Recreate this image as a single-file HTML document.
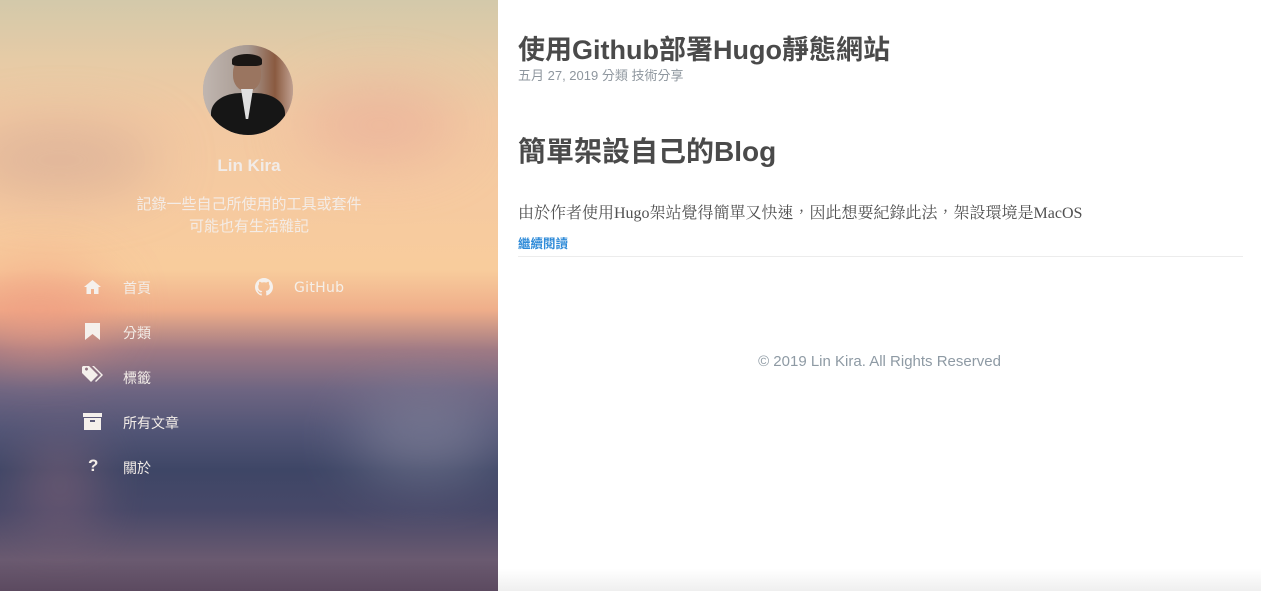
<!DOCTYPE html>
<html><head><meta charset="utf-8"><style>
*{margin:0;padding:0;box-sizing:border-box}
html,body{width:1261px;height:591px;overflow:hidden;background:#fff;font-family:"Liberation Sans","Noto Sans CJK TC",sans-serif}
#side{position:absolute;left:0;top:0;width:498px;height:591px;overflow:hidden;
background:linear-gradient(180deg,#d3c9aa 0px,#e6cba6 60px,#f2c9a2 120px,#f6caa0 200px,#f8cc9c 270px,#efae8a 310px,#a07a84 350px,#6e6582 390px,#525576 430px,#3e4666 470px,#474868 510px,#6a5a70 560px,#5c4a60 591px)}
.blob{position:absolute;border-radius:50%;filter:blur(30px)}
#main{position:absolute;left:498px;top:0;width:763px;height:591px}
.c{position:absolute;color:#f2ece8}
.nav{position:absolute;font-size:14px;color:#f3ede8}
svg{position:absolute;fill:#f5f0ec}
</style></head><body>
<div id="side">
 <div class="blob" style="left:-40px;top:130px;width:200px;height:60px;background:#c29890;opacity:.5"></div>
 <div class="blob" style="left:300px;top:90px;width:160px;height:70px;background:#e8a898;opacity:.6"></div>
 <div class="blob" style="left:-30px;top:270px;width:140px;height:80px;background:#f09a80;opacity:.7"></div>
 <div class="blob" style="left:350px;top:390px;width:150px;height:90px;background:#8a8aa0;opacity:.6"></div>
 <div class="blob" style="left:30px;top:440px;width:60px;height:90px;background:#a07080;opacity:.6"></div>
 <div style="position:absolute;left:203px;top:45px;width:90px;height:90px;border-radius:50%;overflow:hidden;background:#b8a8a0">
  <div style="position:absolute;left:0;top:0;width:90px;height:90px;background:linear-gradient(90deg,#c0b6b0,#a89a92 50%,#8a5a40 80%,#c0a090)"></div>
  <div style="position:absolute;left:30px;top:12px;width:28px;height:34px;border-radius:45%;background:#9a7560"></div>
  <div style="position:absolute;left:29px;top:9px;width:30px;height:12px;border-radius:50% 50% 20% 20%;background:#1a1614"></div>
  <div style="position:absolute;left:8px;top:48px;width:74px;height:50px;border-radius:40% 40% 0 0;background:#161616"></div>
  <div style="position:absolute;left:38px;top:44px;width:12px;height:30px;background:#e0e0e0;clip-path:polygon(0 0,100% 0,60% 100%,40% 100%)"></div>
 </div>
 <div class="c" style="left:0;width:498px;top:155px;text-align:center;font-weight:bold;font-size:17px;line-height:22px">Lin Kira</div>
 <div class="c" style="left:0;width:498px;top:194px;text-align:center;font-size:15px;line-height:22px;color:#f4ece6">記錄一些自己所使用的工具或套件<br>可能也有生活雜記</div>
 <svg style="left:83px;top:279px" width="19" height="16" viewBox="0 0 19 16"><path d="M9.5 1L1 8h2.5v7h4.5v-5h3v5h4.5V8H18z"/></svg>
 <div class="nav" style="left:123px;top:278px">首頁</div>
 <svg style="left:255px;top:278px" width="18" height="18" viewBox="0 0 16 16"><path d="M8 0C3.6 0 0 3.6 0 8c0 3.5 2.3 6.5 5.5 7.6.4.1.5-.2.5-.4v-1.4c-2.2.5-2.7-1-2.7-1-.4-.9-.9-1.2-.9-1.2-.7-.5.1-.5.1-.5.8.1 1.2.8 1.2.8.7 1.2 1.9.9 2.3.7.1-.5.3-.9.5-1.1-1.8-.2-3.6-.9-3.6-4 0-.9.3-1.6.8-2.1-.1-.2-.4-1 .1-2.1 0 0 .7-.2 2.2.8.6-.2 1.3-.3 2-.3s1.4.1 2 .3c1.5-1 2.2-.8 2.2-.8.4 1.1.2 1.9.1 2.1.5.6.8 1.3.8 2.1 0 3.1-1.9 3.7-3.6 3.9.3.3.5.8.5 1.5v2.2c0 .2.1.5.6.4C13.7 14.5 16 11.5 16 8c0-4.4-3.6-8-8-8z"/></svg>
 <div class="nav" style="left:294px;top:280px;font-family:'DejaVu Sans',sans-serif;font-size:14px;letter-spacing:.3px;color:#f5efe8">GitHub</div>
 <svg style="left:85px;top:323px" width="15" height="17" viewBox="0 0 15 17"><path d="M0 0h15v17l-7.5-6L0 17z"/></svg>
 <div class="nav" style="left:123px;top:323px">分類</div>
 <svg style="left:82px;top:366px" width="22" height="20" viewBox="0 0 22 20"><path d="M0 1v6l9 9 7-7-9-9H1zM3 3a1.5 1.5 0 1 1 0 .1z M10 0h2l9 9-7 7-1-1 6-6z"/></svg>
 <div class="nav" style="left:123px;top:368px">標籤</div>
 <svg style="left:83px;top:413px" width="19" height="17" viewBox="0 0 19 17"><path d="M0 0h19v4H0zM1 5h17v12H1zM7 7v2h5V7z" fill-rule="evenodd"/></svg>
 <div class="nav" style="left:123px;top:413px">所有文章</div>
 <div class="nav" style="left:88px;top:456px;font-weight:bold;font-size:17px">?</div>
 <div class="nav" style="left:123px;top:458px">關於</div>
</div>
<div id="main">
 <div style="position:absolute;left:20px;top:28px;font-size:27px;font-weight:bold;color:#4a4a4a">使用Github部署Hugo靜態網站</div>
 <div style="position:absolute;left:20px;top:65px;font-size:13px;color:#8e969e">五月 27, 2019 分類 技術分享</div>
 <div style="position:absolute;left:20px;top:130px;font-size:28px;font-weight:bold;color:#4a4a4a">簡單架設自己的Blog</div>
 <div style="position:absolute;left:20px;top:200px;font-size:16px;color:#505050;font-family:'Liberation Serif','Noto Serif CJK TC','Noto Serif CJK SC',serif">由於作者使用Hugo架站覺得簡單又快速，因此想要紀錄此法，架設環境是MacOS</div>
 <div style="position:absolute;left:20px;top:233px;font-size:12.5px;color:#2d8ad8;font-weight:bold">繼續閱讀</div>
 <div style="position:absolute;left:20px;top:256px;width:725px;height:1px;background:#ececec"></div>
 <div style="position:absolute;left:0;width:763px;top:353px;text-align:center;font-size:15px;color:#8e9aa4">© 2019 Lin Kira. All Rights Reserved</div>
 <div style="position:absolute;left:0;bottom:0;width:763px;height:22px;background:linear-gradient(180deg,rgba(240,240,240,0),#efefef)"></div>
</div>
</body></html>
